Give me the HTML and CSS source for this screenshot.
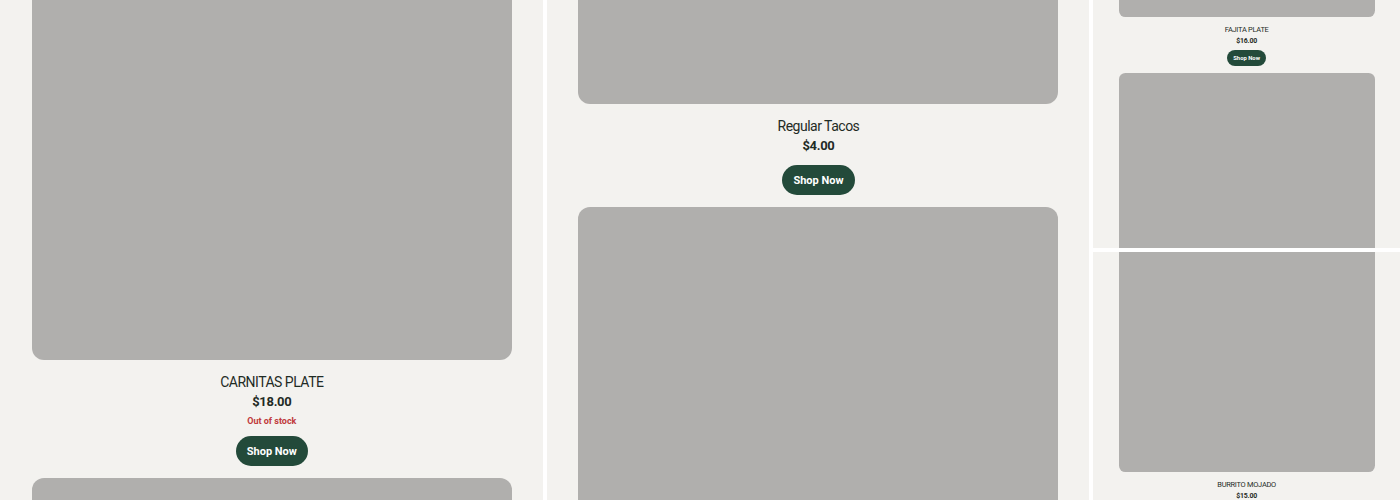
FILE: index.html
```html
<!DOCTYPE html>
<html lang="en">
<head>
<meta charset="utf-8">
<title>Menu</title>
<link rel="stylesheet" href="styles.css">
</head>
<body>
<div class="screens">
  <section class="panel panel-wide">
    <div class="list list-a">
      <article class="card">
        <div class="photo"></div>
        <h3 class="name">CARNITAS PLATE</h3>
        <p class="price">$18.00</p>
        <p class="stock">Out of stock</p>
        <button class="shop">Shop Now</button>
      </article>
      <article class="card">
        <div class="photo"></div>
      </article>
    </div>
  </section>
  <section class="panel panel-wide">
    <div class="list list-b">
      <article class="card">
        <div class="photo"></div>
        <h3 class="name">Regular Tacos</h3>
        <p class="price">$4.00</p>
        <button class="shop">Shop Now</button>
      </article>
      <article class="card">
        <div class="photo"></div>
      </article>
    </div>
  </section>
  <div class="stack">
    <section class="panel panel-small">
      <div class="mini">
        <div class="list list-c">
          <article class="card">
            <div class="photo"></div>
            <h3 class="name">FAJITA PLATE</h3>
            <p class="price">$16.00</p>
            <button class="shop">Shop Now</button>
          </article>
          <article class="card">
            <div class="photo"></div>
          </article>
        </div>
      </div>
    </section>
    <section class="panel panel-small">
      <div class="mini">
        <div class="list list-d">
          <article class="card">
            <div class="photo"></div>
            <h3 class="name">BURRITO MOJADO</h3>
            <p class="price">$15.00</p>
          </article>
        </div>
      </div>
    </section>
  </div>
</div>
</body>
</html>
```
FILE: styles.css
```css
* { box-sizing: border-box; }
html, body {
  margin: 0;
  padding: 0;
  background: #ffffff;
}
body {
  width: 1400px;
  height: 500px;
  overflow: hidden;
  font-family: "Roboto", "Noto Sans", sans-serif;
  color: #1f2b25;
}
.screens {
  display: flex;
  gap: 4px;
  height: 500px;
}
.panel {
  background: #f3f2ef;
  overflow: hidden;
}
.panel-wide {
  width: 543px;
  height: 500px;
  padding: 0 31px 0 32px;
}
.stack {
  display: flex;
  flex-direction: column;
  gap: 4px;
  width: 307px;
}
.panel-small {
  height: 248px;
  padding: 0 25px;
}
.mini {
  zoom: 0.5333;
}
.list {
  display: flex;
  flex-direction: column;
  gap: 12px;
}
.list-a { margin-top: -120px; }
.list-b { margin-top: -376px; }
.list-c { margin-top: -449px; }
.list-d { margin-top: -68px; }
.card {
  display: flex;
  flex-direction: column;
  align-items: center;
}
.photo {
  width: 480px;
  height: 480px;
  background: #b0afad;
  border-radius: 12px;
}
.name {
  margin: 12px 0 0;
  font-size: 14px;
  line-height: 20px;
  font-weight: 400;
  letter-spacing: -0.5px;
}
.mini .name {
  margin-top: 16px;
}
.price {
  margin: 0;
  font-size: 13px;
  line-height: 20px;
  font-weight: 700;
  letter-spacing: -0.3px;
}
.stock {
  margin: 2px 0 0;
  font-size: 9px;
  line-height: 14px;
  font-weight: 700;
  color: #c0393b;
}
.shop {
  margin-top: 9px;
  height: 30px;
  padding: 0 11px;
  border: 0;
  border-radius: 15px;
  background: #234a3a;
  color: #ffffff;
  font-family: inherit;
  font-size: 11px;
  font-weight: 700;
}
.stock + .shop {
  margin-top: 8px;
}
.mini .shop {
  margin-top: 7px;
}
```
